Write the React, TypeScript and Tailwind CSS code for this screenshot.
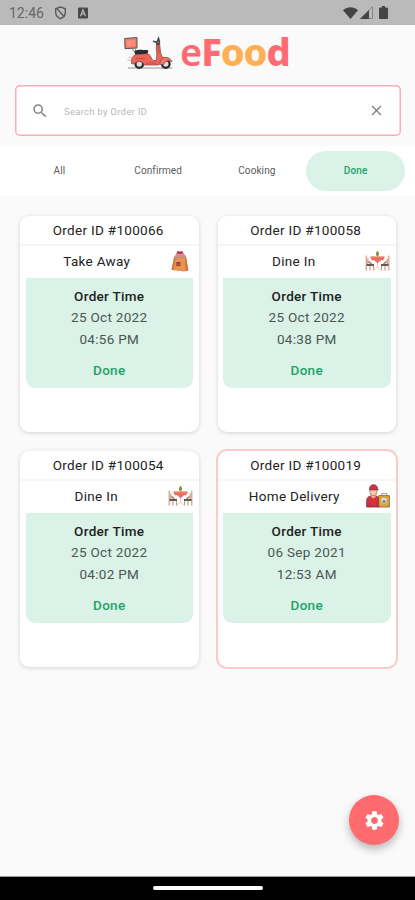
import clsx from 'clsx'
import { MdClose, MdSearch, MdSettings } from 'react-icons/md'

type OrderType = 'takeAway' | 'dineIn' | 'delivery'

interface Order {
  id: string
  type: OrderType
  date: string
  time: string
  status: string
  selected?: boolean
}

const orders: Order[] = [
  { id: '100066', type: 'takeAway', date: '25 Oct 2022', time: '04:56 PM', status: 'Done' },
  { id: '100058', type: 'dineIn', date: '25 Oct 2022', time: '04:38 PM', status: 'Done' },
  { id: '100054', type: 'dineIn', date: '25 Oct 2022', time: '04:02 PM', status: 'Done' },
  { id: '100019', type: 'delivery', date: '06 Sep 2021', time: '12:53 AM', status: 'Done', selected: true },
]

const tabs = ['All', 'Confirmed', 'Cooking', 'Done']
const activeTab = 'Done'

function TakeAwayIcon() {
  return (
    <svg viewBox="0 0 18 22" className="mr-[4px] ml-[2px] h-[22px] w-[18px]">
      <path d="M6 7V4C6 1.5 12 1.5 12 4v3" fill="none" stroke="#a98a80" strokeWidth="1.6" />
      <path d="M3.2 6.5h11.8l2.3 14L13 21.5.5 20z" fill="#ea9150" />
      <path d="M3.2 6.5.5 20l2.3-.6L5 6.5z" fill="#d07a45" />
      <path d="M14 6.5h1l2.3 14-2.5.7z" fill="#d4703f" />
      <path d="M4.5 4.5h9.7l.8 4H3.5z" fill="#c9907c" />
      <path d="M6 .8 8.8 2l2.8-1.2-.6 3.4H6.8z" fill="#d72755" />
      <rect x="5.3" y="12" width="4" height="4" fill="#8d3f31" />
      <path d="M6.3 14.2h2" stroke="#d99273" strokeWidth=".8" />
    </svg>
  )
}

function DineInIcon() {
  return (
    <svg viewBox="0 0 25 22" className="h-[22px] w-[25px]">
      <path d="M12.5 12v5M9.5 20.5l3-4 3 4" fill="none" stroke="#ebcbbb" strokeWidth="1" />
      <path d="M1.2 5.5v15M5 16v4.5M8.5 15.5v5M23.8 5.5v15M20 16v4.5M16.5 15.5v5" stroke="#cf9378" strokeWidth="1.1" />
      <path d="M2.8 8.5V15M22.2 8.5V15" stroke="#d9a185" strokeWidth="1.4" />
      <path d="M1.5 15h7.5M16 15h7.5" stroke="#655754" strokeWidth="1.8" />
      <path d="M3.5 11.5 6.5 14M21.5 11.5l-3 2.5" stroke="#8c6f66" strokeWidth="1.3" />
      <path d="M5 6.8h15l-2 3.6-1.8-.4-3.7 3.2L8.8 10l-1.8.4z" fill="#ee6e5d" />
      <path d="M6 6h13v1.2H6z" fill="#f0ad98" />
      <path d="M12.5.8c-2.2 2.3-2 4.8 0 5.7 2-.9 2.2-3.4 0-5.7z" fill="#829348" />
    </svg>
  )
}

function DeliveryIcon() {
  return (
    <svg viewBox="0 0 24 24" className="h-6 w-6">
      <path d="M.7 23v-6.5c0-3 2-4.2 4.4-4.6h4.6c2.6.5 3.8 2 3.8 4.6V23z" fill="#d92f43" stroke="#673039" strokeWidth=".8" />
      <path d="M5.2 9.5h4.4V13L7.3 14.4 5.2 13z" fill="#efb894" />
      <path d="M3.9 5.5h6.9v3.2c0 4-6.9 4-6.9 0z" fill="#f6c8a4" stroke="#684044" strokeWidth=".5" />
      <path d="M3.5 5.8C3.4 2.4 5 .7 7.5.7s3.9 1.6 3.9 3.6l.9 1.6z" fill="#d92f43" stroke="#673039" strokeWidth=".7" />
      <path d="M3.7 18.5V23M11.2 16.5V23" stroke="#a72236" strokeWidth=".8" />
      <path d="M15.7 11.5v-2h5v2" fill="none" stroke="#a9a29a" strokeWidth="1.1" />
      <rect x="12.8" y="11.7" width="10.5" height="11.3" fill="#dfa13c" stroke="#70502c" strokeWidth=".7" />
      <rect x="15.5" y="14" width="5" height="5.4" fill="#d8ddd8" />
      <path d="m16 18.5 2-3 2 3z" fill="#686e68" />
    </svg>
  )
}

const orderTypes: Record<OrderType, { label: string; icon: React.ElementType }> = {
  takeAway: { label: 'Take Away', icon: TakeAwayIcon },
  dineIn: { label: 'Dine In', icon: DineInIcon },
  delivery: { label: 'Home Delivery', icon: DeliveryIcon },
}

function StatusBar() {
  return (
    <div className="flex h-[25px] shrink-0 items-center bg-[#bababa] pr-[27px] pl-[9px]">
      <span className="text-[14px] leading-none text-[#666]">12:46</span>
      <svg viewBox="0 0 14 16" className="ml-[10px] h-[14px] w-[13px]" fill="none" stroke="#555" strokeWidth="1.5">
        <path d="M7 1 1.5 3.2v4.3c0 3.2 2.2 5.7 5.5 7 3.3-1.3 5.5-3.8 5.5-7V3.2z" />
        <path d="m3 3 8.5 9.5" />
      </svg>
      <svg viewBox="0 0 10 12" className="ml-[11px] h-3 w-[10px]">
        <rect y=".5" width="10" height="11" rx="1" fill="#484848" />
        <path d="M2.5 9.2 5 2.8l2.5 6.4M3.5 7h3" fill="none" stroke="#bababa" strokeWidth="1.2" />
      </svg>
      <svg viewBox="0 0 15 12" className="ml-auto h-3 w-[15px]">
        <path d="M0 3.3C4.2-.7 10.8-.7 15 3.3L7.5 12z" fill="#444" />
      </svg>
      <svg viewBox="0 0 13 13" className="ml-[2px] h-[13px] w-[13px]">
        <path d="M12.5.8v11.7H.8z" fill="#bababa" stroke="#777" strokeWidth=".8" />
        <path d="M9 4v9H0z" fill="#444" />
      </svg>
      <svg viewBox="0 0 9 13" className="ml-[6px] h-[13px] w-[9px]">
        <path d="M3 0h3v1.4h2q1 0 1 1V12q0 1-1 1H1q-1 0-1-1V2.4q0-1 1-1h2z" fill="#444" />
      </svg>
    </div>
  )
}

function Scooter() {
  return (
    <svg viewBox="0 0 50 34" className="h-[34px] w-[50px]">
      <path d="M4 32h44" stroke="#c9c5c5" strokeWidth="1.8" />
      <path d="M.7 2.5 13 1.5V12L1 12.7z" fill="#f5796b" stroke="#605152" strokeWidth="1" />
      <path d="M2.5 4.5 11 4v6l-8 .5z" fill="#fa9080" />
      <path d="m8 12.5 3 4.3 1-.3-1-4" fill="none" stroke="#8c8181" strokeWidth="1" />
      <circle cx="15.3" cy="28" r="3.8" fill="#ddd" stroke="#292a2e" strokeWidth="2.2" />
      <circle cx="41.8" cy="28" r="3.8" fill="#ddd" stroke="#292a2e" strokeWidth="2.2" />
      <path d="M11 18.5 23 17.5c4 .5 4 6 6.5 7h2.5c2-6-.5-10.5.5-16l3-2 1 9.5c1 5 3.5 6 4.5 7-4 1-5.8 3.2-6.3 6H20c-1-4.2-7-5-9.2-1.2H7.5c-.7-4 .7-7 3.5-9.3z" fill="#ec6557" stroke="#7d4443" strokeWidth=".7" />
      <path d="M36 26.5c.5-6 9-7.5 12-.8-4-1.8-6.6-1-8.4 2.8h-4z" fill="#f17465" stroke="#824542" strokeWidth=".7" />
      <path d="M10.5 15c4-2.2 7-.8 13-1 1.2 1 1 2.3-.6 3.8L11 18.5z" fill="#292b31" />
      <path d="m29 5.3 4 .9 1.5-3.7 1 3.5-1 2.5-2.5-1" fill="none" stroke="#4a4145" strokeWidth="1.6" />
      <path d="m34 10 1.2 8M12 22.5h9M22 27h10" fill="none" stroke="#b94c45" strokeWidth=".9" />
      <path d="M5 21.5h4M3.5 24h4" stroke="#b8a9a8" strokeWidth=".8" />
    </svg>
  )
}

function Logo() {
  return (
    <div className="flex h-[60px] shrink-0 items-start pt-[11px] pl-[124px]">
      <Scooter />
      <div className="mt-[-4px] ml-[6px] flex font-['Noto_Sans'] text-[38px] leading-[38px] font-extrabold tracking-[-1.1px] text-[#ff6b72]">
        <span className="font-semibold">e</span>
        <span>F</span>
        <span className="text-[#ffb054]">oo</span>
        <span>d</span>
      </div>
    </div>
  )
}

function SearchBox() {
  return (
    <div className="mr-[14px] ml-[15px] flex h-[51px] shrink-0 items-center rounded-[5px] bg-white pr-[16px] pl-[16px] shadow-[inset_0_0_0_1.5px_#fbadb2]">
      <MdSearch className="size-[18px] text-[#858585]" />
      <span className="ml-[15px] pt-[3px] text-[9.5px] tracking-[0.27px] text-[#b8b8b8]">Search by Order ID</span>
      <MdClose className="ml-auto size-[17px] text-[#858585]" />
    </div>
  )
}

function Tabs() {
  return (
    <div className="mt-[10px] flex h-[50px] shrink-0 items-center bg-white px-[10px]">
      {tabs.map(tab => (
        <div
          key={tab}
          className={clsx(
            'flex h-10 flex-1 items-center justify-center rounded-full pb-[2px] text-[10px] tracking-[0.1px]',
            tab === activeTab ? 'bg-[#daf2e8] font-medium text-[#1fa366]' : 'text-[#5c5c5c]'
          )}
        >
          {tab}
        </div>
      ))}
    </div>
  )
}

function OrderCard({ order }: { order: Order }) {
  const { label, icon: Icon } = orderTypes[order.type]
  return (
    <div
      className={clsx(
        'flex h-[216px] flex-col rounded-[9px] bg-white text-[13.5px] tracking-[0.3px] text-[#222]',
        order.selected ? 'shadow-[0_0_0_2px_#fccacc]' : 'shadow-[0_1px_4px_rgba(0,0,0,0.16)]'
      )}
    >
      <div className="flex h-[30px] items-center justify-center border-b-2 border-[#f6f6f6] pr-[2px]">
        Order ID #{order.id}
      </div>
      <div className="flex h-[32px] items-center pr-[6px] pb-[2px] pl-[5px]">
        <span className="flex-1 text-center">{label}</span>
        <Icon />
      </div>
      <div className="mx-[5.5px] flex h-[110px] flex-col items-center rounded-b-[9px] bg-[#daf2e8] pt-[8px] leading-[21.3px] text-[#4c5753]">
        <span className="font-medium text-[#1d2220]">Order Time</span>
        <span>{order.date}</span>
        <span>{order.time}</span>
        <span className="mt-[10px] font-medium text-[#1fa366]">{order.status}</span>
      </div>
    </div>
  )
}

export default function App() {
  return (
    <div className="relative flex h-[900px] w-[415px] flex-col overflow-hidden bg-[#fafafa] font-[Roboto,sans-serif]">
      <StatusBar />
      <Logo />
      <SearchBox />
      <Tabs />
      <main className="grid flex-1 grid-cols-2 content-start gap-x-[19px] gap-y-[19px] pt-[20px] pr-[19px] pl-[20px]">
        {orders.map(order => (
          <OrderCard key={order.id} order={order} />
        ))}
      </main>

      {/* Floating settings button */}
      <button className="absolute right-[16px] bottom-[55px] flex size-[50px] items-center justify-center rounded-full bg-[#ff6b6e] shadow-[0_4px_8px_rgba(0,0,0,0.28)]">
        <MdSettings className="size-[23px] text-white" />
      </button>

      {/* Gesture bar */}
      <div className="flex h-6 shrink-0 items-center justify-center border-t border-[#999] bg-black pb-[2px]">
        <div className="h-1 w-[110px] rounded-full bg-white" />
      </div>
    </div>
  )
}
